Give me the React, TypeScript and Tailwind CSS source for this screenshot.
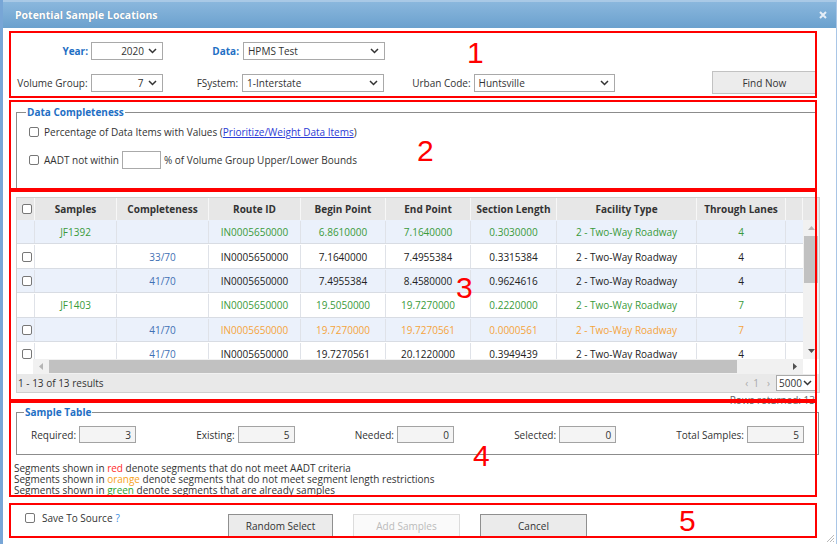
import React from 'react';

type Tone = 'green' | 'orange' | 'plain';

type Row = {
  check: boolean;
  sample: string;
  comp: string;
  begin: string;
  end: string;
  len: string;
  lanes: string;
  tone: Tone;
};

const rows: Row[] = [
  { check: false, sample: 'JF1392', comp: '', begin: '6.8610000', end: '7.1640000', len: '0.3030000', lanes: '4', tone: 'green' },
  { check: true, sample: '', comp: '33/70', begin: '7.1640000', end: '7.4955384', len: '0.3315384', lanes: '4', tone: 'plain' },
  { check: true, sample: '', comp: '41/70', begin: '7.4955384', end: '8.4580000', len: '0.9624616', lanes: '4', tone: 'plain' },
  { check: false, sample: 'JF1403', comp: '', begin: '19.5050000', end: '19.7270000', len: '0.2220000', lanes: '7', tone: 'green' },
  { check: true, sample: '', comp: '41/70', begin: '19.7270000', end: '19.7270561', len: '0.0000561', lanes: '7', tone: 'orange' },
  { check: true, sample: '', comp: '41/70', begin: '19.7270561', end: '20.1220000', len: '0.3949439', lanes: '4', tone: 'plain' },
];

const toneText: Record<Tone, string> = {
  green: 'text-[#3a9a3a]',
  orange: 'text-[#f5a43c]',
  plain: 'text-[#222]',
};

const cols = ['w-[18px]', 'w-[82px]', 'w-[92px]', 'w-[92px]', 'w-[85px]', 'w-[85px]', 'w-[86px]', 'w-[140px]', 'w-[89px]', 'w-[17px]'];
const heads = ['', 'Samples', 'Completeness', 'Route ID', 'Begin Point', 'End Point', 'Section Length', 'Facility Type', 'Through Lanes', ''];

function Chevron() {
  return (
    <svg width="9" height="6" viewBox="0 0 9 6" className="shrink-0">
      <path d="M1 1l3.5 3.5L8 1" fill="none" stroke="#333" strokeWidth="1.5" />
    </svg>
  );
}

function Check() {
  return <span className="block h-[10px] w-[10px] rounded-[2px] border border-[#777] bg-white" />;
}

function Select({ w, value, right }: { w: string; value: string; right?: boolean }) {
  return (
    <div className={`flex h-[18px] items-center border border-[#a9a9a9] bg-white pl-[4px] pr-[5px] ${w}`}>
      <span className={right ? 'flex-1 pr-[4px] text-right' : 'flex-1'}>{value}</span>
      <Chevron />
    </div>
  );
}

function Annotated({ className, num, numPos, children }: { className: string; num: string; numPos: string; children: React.ReactNode }) {
  return (
    <div className={`relative shrink-0 ${className}`}>
      {children}
      <div className="pointer-events-none absolute inset-0 z-10 border-2 border-[#ff0000]" />
      <span className={`pointer-events-none absolute z-10 font-['Liberation_Sans',sans-serif] text-[30px] leading-none text-[#ff0000] ${numPos}`}>{num}</span>
    </div>
  );
}

function ReadOnly({ label, value }: { label: string; value: string }) {
  return (
    <div className="flex items-center gap-[3px]">
      <span>{label}</span>
      <div className="flex h-[17px] w-[57px] items-center justify-end border border-[#a3a3a3] bg-[#f4f4f4] pr-[4px]">{value}</div>
    </div>
  );
}

export default function App() {
  return (
    <div className="flex h-[544px] w-[837px] flex-col overflow-hidden border-l-[3px] border-r border-l-[#78a6d6] border-r-[#a9c6e6] bg-white font-['Open_Sans',sans-serif] text-[10px] leading-[14px] text-[#333]">
      {/* title bar */}
      <div className="flex h-[28px] shrink-0 items-center justify-between border-t-2 border-[#a9c9e6] bg-gradient-to-b from-[#8ab7dd] to-[#6ba1ce] pl-[12px] pr-[9px]">
        <span className="text-[10.5px] font-bold text-white [text-shadow:0_0_1px_rgba(0,0,0,0.25)]">Potential Sample Locations</span>
        <svg width="8" height="8" viewBox="0 0 8 8">
          <path d="M1 1l6 6M7 1l-6 6" stroke="#e6eef7" strokeWidth="2" />
        </svg>
      </div>

      <div className="relative flex flex-1 flex-col pl-[6px] pt-[3px]">
        {/* 1 */}
        <Annotated className="h-[67px] w-[808px]" num="1" numPos="left-[458px] top-[7px]">
          <div className="mt-[11px] flex h-[18px] items-center">
            <span className="w-[79px] text-right font-bold text-[#1f6fc4]">Year:</span>
            <div className="ml-[3px]"><Select w="w-[72px]" value="2020" right /></div>
            <span className="w-[76px] text-right font-bold text-[#1f6fc4]">Data:</span>
            <div className="ml-[4px]"><Select w="w-[142px]" value="HPMS Test" /></div>
          </div>
          <div className="mt-[11px] flex h-[23px] items-center">
            <span className="w-[79px] text-right">Volume Group:</span>
            <div className="ml-[3px]"><Select w="w-[72px]" value="7" right /></div>
            <span className="w-[76px] text-right">FSystem:</span>
            <div className="ml-[4px]"><Select w="w-[142px]" value="1-Interstate" /></div>
            <span className="w-[87px] text-right">Urban Code:</span>
            <div className="ml-[3px]"><Select w="w-[141px]" value="Huntsville" /></div>
            <button className="ml-[97px] flex h-[23px] w-[106px] items-center justify-center border border-[#c2c2c2] bg-[#ececec] text-[#333]">Find Now</button>
          </div>
        </Annotated>

        {/* 2 */}
        <Annotated className="mt-[2px] h-[90px] w-[808px]" num="2" numPos="left-[408px] top-[36px]">
          <fieldset className="ml-[7px] mt-[5px] w-[800px] border border-[#8c8c8c] px-[9px] pb-[20px]">
            <legend className="px-[1px] font-bold text-[#1f6fc4]">Data Completeness</legend>
            <div className="ml-[3px] mt-[5px] flex h-[16px] items-center">
              <Check />
              <span className="ml-[5px]">Percentage of Data Items with Values (<span className="text-[#2b3bd6] underline">Prioritize/Weight Data Items</span>)</span>
            </div>
            <div className="ml-[3px] mt-[11px] flex h-[18px] items-center">
              <Check />
              <span className="ml-[5px]">AADT not within</span>
              <span className="ml-[3px] h-[18px] w-[39px] border border-[#aaa] bg-white" />
              <span className="ml-[3px]">% of Volume Group Upper/Lower Bounds</span>
            </div>
          </fieldset>
        </Annotated>

        {/* 3 */}
        <Annotated className="h-[211px] w-[808px]" num="3" numPos="left-[447px] top-[83px]">
          <div className="ml-[7px] mt-[7px] flex w-[804px] flex-col border border-[#cfcfcf]">
            <div className="flex h-[22px] bg-[#e7e7e7] font-bold text-[#333]">
              {heads.map((h, i) => (
                <div key={i} className={`flex items-center justify-center border-r border-[#f7f7f7] ${cols[i]}`}>
                  {i === 0 ? <span className="pl-[2px]"><Check /></span> : h}
                </div>
              ))}
            </div>
            <div className="flex h-[139px]">
              <div className="flex flex-1 flex-col overflow-hidden">
                {rows.map((r, i) => (
                  <div key={i} className={`flex h-[24.4px] shrink-0 border-b border-[#d8dce3] pt-[1px] ${i % 2 === 0 ? 'bg-[#ebf1fb]' : 'bg-white'} ${toneText[r.tone]}`}>
                    <div className={`flex items-center justify-center border-r border-[#dfe2e8] pl-[2px] ${cols[0]}`}>{r.check && <Check />}</div>
                    <div className={`flex items-center justify-center border-r border-[#dfe2e8] ${cols[1]}`}>{r.sample}</div>
                    <div className={`flex items-center justify-center border-r border-[#dfe2e8] text-[#3f70b4] ${cols[2]}`}>{r.comp}</div>
                    <div className={`flex items-center justify-center border-r border-[#dfe2e8] ${cols[3]}`}>IN0005650000</div>
                    <div className={`flex items-center justify-center border-r border-[#dfe2e8] ${cols[4]}`}>{r.begin}</div>
                    <div className={`flex items-center justify-center border-r border-[#dfe2e8] ${cols[5]}`}>{r.end}</div>
                    <div className={`flex items-center justify-center border-r border-[#dfe2e8] ${cols[6]}`}>{r.len}</div>
                    <div className={`flex items-center justify-center border-r border-[#dfe2e8] ${cols[7]}`}>2 - Two-Way Roadway</div>
                    <div className={`flex items-center justify-center border-r border-[#dfe2e8] ${cols[8]}`}>{r.lanes}</div>
                    <div className={cols[9]} />
                  </div>
                ))}
              </div>
              <div className="flex w-[16px] flex-col bg-[#f1f1f1]">
                <div className="flex h-[16px] items-center justify-center">
                  <svg width="7" height="4" viewBox="0 0 7 4"><path d="M0 4L3.5 0L7 4z" fill="#b5b5b5" /></svg>
                </div>
                <div className="mx-[1px] h-[47px] bg-[#c1c1c1]" />
                <div className="flex-1" />
                <div className="flex h-[16px] items-center justify-center">
                  <svg width="7" height="4" viewBox="0 0 7 4"><path d="M0 0L3.5 4L7 0z" fill="#505050" /></svg>
                </div>
              </div>
            </div>
            <div className="flex h-[15px]">
              <div className="w-[16px] bg-white" />
              <div className="flex flex-1 items-stretch bg-[#f1f1f1]">
                <div className="flex w-[16px] items-center justify-center">
                  <svg width="4" height="7" viewBox="0 0 4 7"><path d="M4 0L0 3.5L4 7z" fill="#b5b5b5" /></svg>
                </div>
                <div className="my-[1px] w-[688px] bg-[#c1c1c1]" />
                <div className="flex-1" />
                <div className="flex w-[16px] items-center justify-center">
                  <svg width="4" height="7" viewBox="0 0 4 7"><path d="M0 0L4 3.5L0 7z" fill="#505050" /></svg>
                </div>
              </div>
              <div className="w-[16px] bg-white" />
            </div>
            <div className="flex h-[18px] items-center justify-between bg-[#e9e9e9] pl-[1px] pr-[3px] text-[#333]">
              <span>1 - 13 of 13 results</span>
              <div className="flex items-center">
                <span className="text-[#aaa]">‹</span>
                <span className="ml-[5px] text-[#aaa]">1</span>
                <span className="ml-[8px] text-[#aaa]">›</span>
                <div className="ml-[6px] flex h-[16px] w-[40px] items-center justify-between border border-[#aaa] bg-white pl-[2px] pr-[3px]">
                  <span>5000</span>
                  <Chevron />
                </div>
              </div>
            </div>
          </div>
          <div className="w-[810px] pr-[4px] text-right text-[#666]">Rows returned: 13</div>
        </Annotated>

        {/* 4 */}
        <Annotated className="h-[96px] w-[808px]" num="4" numPos="left-[464px] top-[40px]">
          <fieldset className="ml-[7px] mt-[4px] w-[803px] border border-[#8c8c8c] px-[7px] pb-[11px]">
            <legend className="px-[1px] font-bold text-[#1f6fc4]">Sample Table</legend>
            <div className="mt-[7px] flex h-[17px] items-center justify-between px-[7px]">
              <ReadOnly label="Required:" value="3" />
              <ReadOnly label="Existing:" value="5" />
              <ReadOnly label="Needed:" value="0" />
              <ReadOnly label="Selected:" value="0" />
              <ReadOnly label="Total Samples:" value="5" />
            </div>
          </fieldset>
          <div className="ml-[5px] mt-[8px] leading-[11px] text-[#333]">
            <div>Segments shown in <span className="text-[#ff2b2b]">red</span> denote segments that do not meet AADT criteria</div>
            <div>Segments shown in <span className="text-[#f7a21b]">orange</span> denote segments that do not meet segment length restrictions</div>
            <div>Segments shown in <span className="text-[#2ea02e]">green</span> denote segments that are already samples</div>
          </div>
        </Annotated>

        {/* 5 */}
        <Annotated className="mt-[6px] h-[35px] w-[808px]" num="5" numPos="left-[670px] top-[3px]">
          <div className="flex items-start">
            <div className="flex w-[219px] items-center pl-[16px] pt-[8px]">
              <Check />
              <span className="ml-[7px]">Save To Source</span>
              <span className="ml-[3px] text-[#3a8de0]">?</span>
            </div>
            <button className="mt-[11px] flex h-[24px] w-[105px] items-center justify-center border border-[#8f8f8f] bg-[#ebebeb] text-[#333]">Random Select</button>
            <button className="ml-[20px] mt-[11px] flex h-[24px] w-[107px] items-center justify-center border border-[#dcdcdc] bg-[#fafafa] text-[#bbb]">Add Samples</button>
            <button className="ml-[20px] mt-[11px] flex h-[24px] w-[107px] items-center justify-center border border-[#8f8f8f] bg-[#ebebeb] text-[#333]">Cancel</button>
          </div>
        </Annotated>

        <svg width="8" height="8" viewBox="0 0 8 8" className="absolute bottom-[2px] right-[2px]">
          <path d="M8 1L1 8M8 4L4 8M8 7L7 8" stroke="#b9b9b9" strokeWidth="1" />
        </svg>
      </div>
    </div>
  );
}
